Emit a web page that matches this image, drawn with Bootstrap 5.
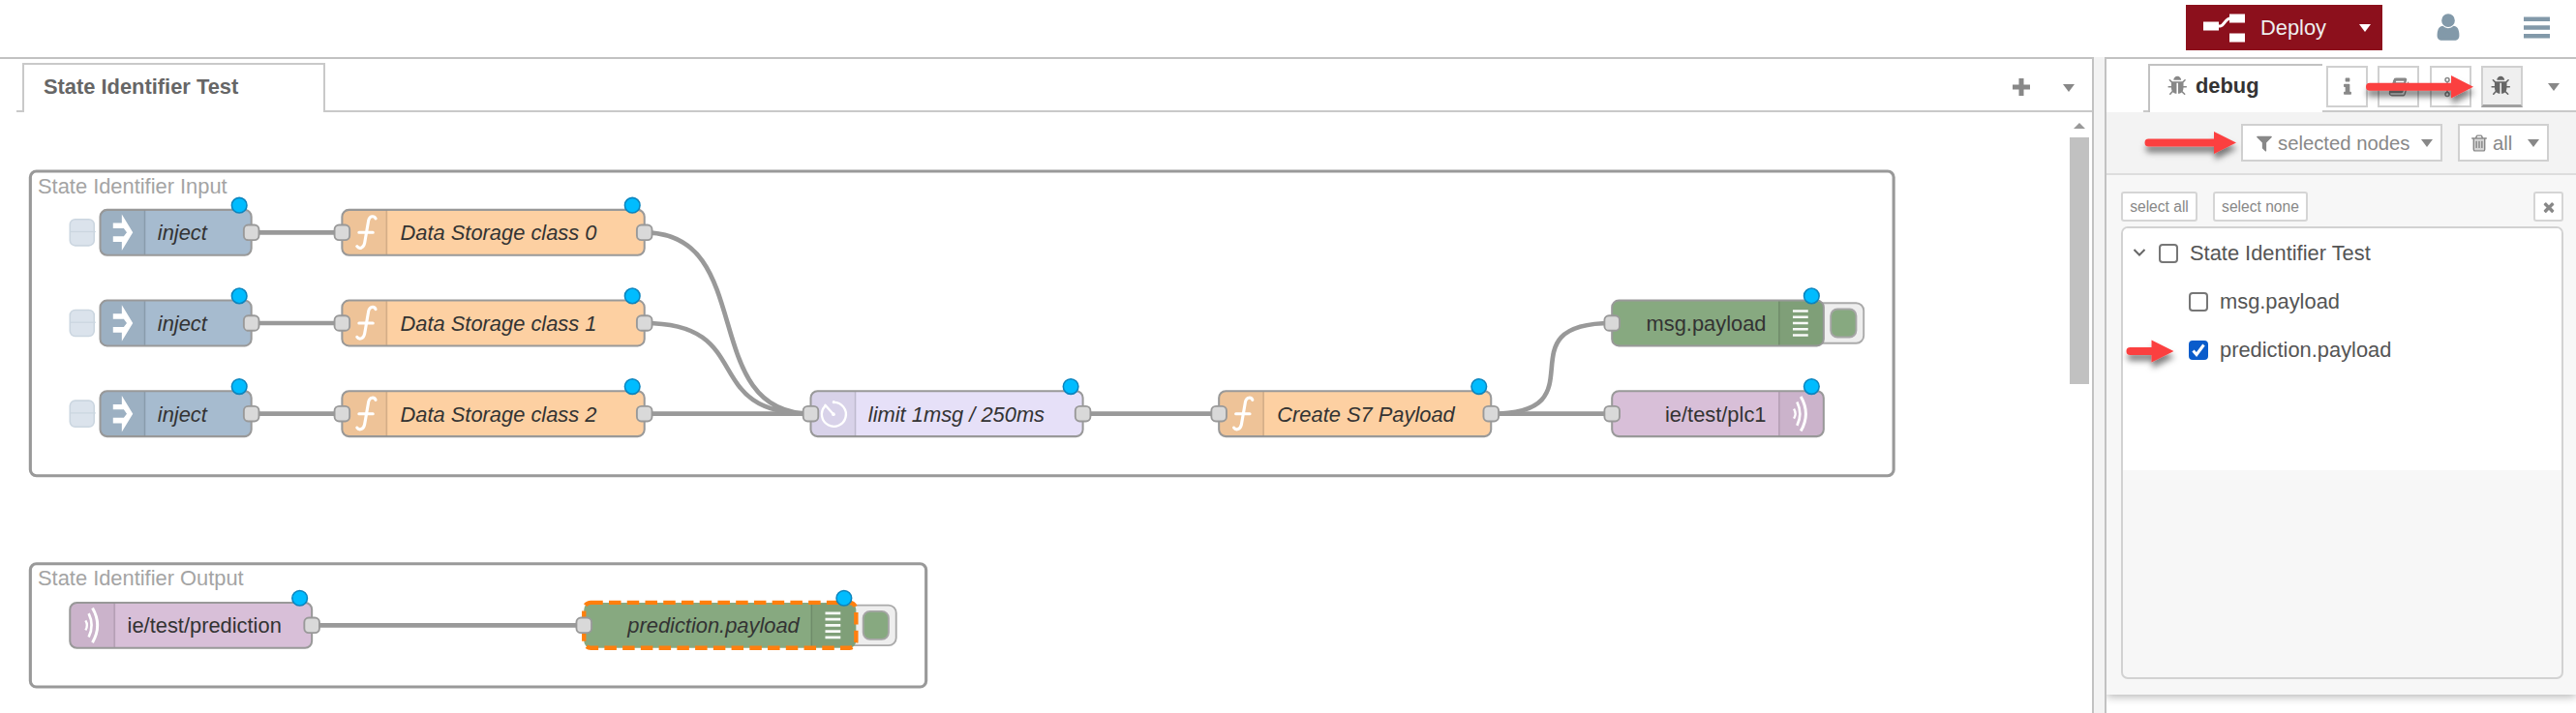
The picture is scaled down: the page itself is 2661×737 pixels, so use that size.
<!DOCTYPE html>
<html lang="en">
<head>
<meta charset="utf-8">
<title>Node-RED</title>
<link href="https://cdn.jsdelivr.net/npm/bootstrap@5.3.0/dist/css/bootstrap.min.css" rel="stylesheet">
<style>
  :root { --line: #c2c2c2; --grey: #888; }
  body { font: 21.87px/30px "Liberation Sans", Arial, sans-serif; color: #555; height: 737px; overflow: hidden; background: #fff; }
  svg { display: block; flex: none; }
  .fa-ico { fill: currentColor; width: 22px; height: 22px; }
  .caret { width: 0; height: 0; border: 6.5px solid transparent; border-top: 8px solid var(--grey); border-bottom: 0; }

  .topbar { height: 59px; padding: 5px 27px 0 0; }
  .deploy { width: 203px; height: 47px; background: #8c101c; color: #eee; padding: 0 12px 0 18px; border: 0; border-radius: 0; font-size: 21.87px; }
  .deploy .caret { border-top-color: #fff; }
  .user { color: #8299a9; width: 32px; height: 32px; margin: 7px 62px 0 52px; }

  .workspace { width: 2163px; border-top: 2px solid var(--line); border-right: 2px solid var(--line); }
  .gutter { width: 11px; background: #f3f3f3; }
  .sidebar { border-top: 2px solid var(--line); border-left: 2px solid var(--line); position: relative; }

  .tabbar { height: 55px; }
  .rule { border-bottom: 2px solid #c9c9c9; }
  .flow-tab { width: 313px; margin-top: 4px; border: 2px solid #c9c9c9; border-bottom: 0; font-weight: 700; color: #666; padding: 8px 0 0 20px; }
  .scroller { width: 23px; padding-top: 11px; }
  .thumb { width: 20px; height: 255px; margin-top: 9px; background: #c1c1c1; }

  .side-tab { width: 180px; margin-top: 5px; border: 2px solid #c2c2c2; border-right: 0; border-bottom: 0; padding: 6px 0 0 18px; font-weight: 700; color: #333; }
  .tool { width: 43px; height: 43px; border: 2px solid #d0d0d0; color: var(--grey); background: #fff; margin-right: 10.3px; }
  .tool.on { background: #efefef; border-bottom: 3px solid #a0a0a0; color: #666; margin-right: 0; }

  .toolbar { height: 65px; background: #f3f3f3; border-bottom: 2px solid #ddd; padding: 12px 28px 0 0; }
  .toolbtn { height: 39px; border: 2px solid #d0d0d0; background: #fff; color: var(--grey); font-size: 20.3px; padding: 0 8px 0 12px; }
  .panel { height: 537px; background: #f7f7f7; padding: 17px 13px 0 15px; box-shadow: 0 2px 9px rgba(0,0,0,.3); clip-path: inset(0 0 -14px 0); }
  .minibtn { height: 31px; border: 2px solid #d5d5d5; border-radius: 3px; background: #fff; color: var(--grey); font-size: 15.6px; line-height: 28px; padding: 0; }
  .tree { height: 468px; margin-top: 5px; border: 2px solid #d2d2d2; border-radius: 7px; overflow: hidden; }
  .tree-items { height: 250px; background: #fff; }
  .tree-row { height: 50px; padding: 11px 0 0 68px; }
  .tree-row.parent { padding-left: 10px; }
  .box { width: 20px; height: 20px; margin: 5px 12px 0 0; border: 2px solid #767676; border-radius: 4px; flex: none; }
  .box.checked { background: #0a5ccb; border-color: #0a5ccb; }
  .callouts { position: absolute; left: 0; top: 0; pointer-events: none; }

  rect.body { stroke: #999; stroke-width: 1.3; }
  .wire { fill: none; stroke: #999; stroke-width: 3; }
  .port { fill: #d9d9d9; stroke: #999; stroke-width: 1.2; }
  .dot { fill: #00bcff; stroke: #0d84bd; stroke-width: 1; }
  .grp { fill: none; stroke: #999; stroke-width: 2; }
  .ntext { font-size: 14px; fill: #333; }
  .glabel { font-size: 14px; fill: #a4a4a4; }
  .it { font-style: italic; }
</style>
</head>
<body class="d-flex flex-column">
<svg width="0" height="0" class="position-absolute">
  <defs>
    <symbol id="bug" viewBox="0 0 1792 1792"><path d="M1632 960q0 26-19 45t-45 19h-224q0 171-67 290l208 209q19 19 19 45t-19 45q-18 19-45 19t-45-19l-198-197q-5 5-15 13t-42 28.500-65 36.500-82 29-97 13v-896h-128v896q-51 0-101.500-13.500t-87-33-66-39-43.500-32.500l-15-14-183 207q-20 21-48 21-24 0-43-16-19-18-20.500-44.500t15.500-46.500l202-227q-58-114-58-274h-224q-26 0-45-19t-19-45 19-45 45-19h224v-294l-173-173q-19-19-19-45t19-45 45-19 45 19l173 173h844l173-173q19-19 45-19t45 19 19 45-19 45l-173 173v294h224q26 0 45 19t19 45zm-480-576h-640q0-133 93.500-226.500t226.500-93.500 226.500 93.500 93.500 226.500z"/></symbol>
    <symbol id="info" viewBox="0 0 1792 1792"><path d="M1216 1344v128q0 26-19 45t-45 19h-512q-26 0-45-19t-19-45v-128q0-26 19-45t45-19h64v-384h-64q-26 0-45-19t-19-45v-128q0-26 19-45t45-19h384q26 0 45 19t19 45v576h64q26 0 45 19t19 45zm-128-1152v192q0 26-19 45t-45 19h-256q-26 0-45-19t-19-45v-192q0-26 19-45t45-19h256q26 0 45 19t19 45z"/></symbol>
    <symbol id="book" viewBox="0 0 1792 1792"><path d="M1703 478q40 57 18 129l-275 906q-19 64-76.500 107.500t-122.500 43.500h-923q-77 0-148.500-53.500t-99.500-131.500q-24-67-2-127 0-4 3-27t4-37q1-8-3-21.500t-3-19.500q2-11 8-21t16.500-23.500 16.500-23.500q23-38 45-91.500t30-91.500q3-10 .5-30t-.5-28q3-11 17-28t17-23q21-36 42-92t25-90q1-9-2.500-32t.5-28q4-13 22-30.500t22-22.500q19-26 42.500-84.500t27.500-96.500q1-8-3-25.500t-2-26.500q2-8 9-18t18-23 17-21q8-12 16.500-30.500t15-35 16-36 19.500-32 26.500-23.500 36-11.500 47.500 5.500l-1 3q38-9 51-9h761q74 0 114 56t18 130l-274 906q-36 119-71.500 153.500t-128.500 34.500h-869q-27 0-38 15-11 16-1 43 24 70 144 70h923q29 0 56-15.500t35-41.500l300-987q7-22 5-57 38 15 59 43zm-1064 2q-4 13 2 22.500t20 9.500h608q13 0 25.500-9.500t16.500-22.500l21-64q4-13-2-22.500t-20-9.500h-608q-13 0-25.500 9.500t-16.500 22.500zm-83 256q-4 13 2 22.500t20 9.500h608q13 0 25.500-9.500t16.500-22.500l21-64q4-13-2-22.500t-20-9.500h-608q-13 0-25.500 9.500t-16.500 22.500z"/></symbol>
    <symbol id="filter" viewBox="0 0 1792 1792"><path d="M1595 295q17 41-14 70l-493 493v742q0 42-39 59-13 5-25 5-27 0-45-19l-256-256q-19-19-19-45v-486l-493-493q-31-29-14-70 17-39 59-39h1280q42 0 59 39z"/></symbol>
    <symbol id="trash" viewBox="0 0 1792 1792"><path fill-opacity=".35" d="M448 512h896v1024h-896z"/><path d="M704 736v576q0 14-9 23t-23 9h-64q-14 0-23-9t-9-23v-576q0-14 9-23t23-9h64q14 0 23 9t9 23zm256 0v576q0 14-9 23t-23 9h-64q-14 0-23-9t-9-23v-576q0-14 9-23t23-9h64q14 0 23 9t9 23zm256 0v576q0 14-9 23t-23 9h-64q-14 0-23-9t-9-23v-576q0-14 9-23t23-9h64q14 0 23 9t9 23zm128 724v-948h-896v948q0 22 7 40.500t14.500 27 10.500 8.500h832q3 0 10.500-8.500t14.500-27 7-40.500zm-672-1076h448l-48-117q-7-9-17-11h-317q-10 2-17 11zm928 32v64q0 14-9 23t-23 9h-96v948q0 83-47 143.500t-113 60.500h-832q-66 0-113-58.500t-47-141.500v-952h-96q-14 0-23-9t-9-23v-64q0-14 9-23t23-9h309l70-167q15-37 54-63t79-26h320q40 0 79 26t54 63l70 167h309q14 0 23 9t9 23z"/></symbol>
    <symbol id="person" viewBox="0 0 1792 1792"><path d="M1536 1399q0 109-62.500 187t-150.500 78h-854q-88 0-150.500-78t-62.500-187q0-85 8.500-160.500t31.500-152 58.500-131 94-89 134.500-34.500q131 128 313 128t313-128q76 0 134.500 34.500t94 89 58.500 131 31.500 152 8.500 160.500zm-256-887q0 159-112.500 271.500t-271.500 112.500-271.500-112.500-112.500-271.500 112.500-271.500 271.500-112.500 271.500 112.500 112.500 271.500z"/></symbol>
    <symbol id="times" viewBox="0 0 1792 1792"><path d="M1490 1322q0 40-28 68l-136 136q-28 28-68 28t-68-28l-294-294-294 294q-28 28-68 28t-68-28l-136-136q-28-28-28-68t28-68l294-294-294-294q-28-28-28-68t28-68l136-136q28-28 68-28t68 28l294 294 294-294q28-28 68-28t68 28l136 136q28 28 28 68t-28 68l-294 294 294 294q28 28 28 68z"/></symbol>

    <g id="i-inject"><path fill="#fff" d="M8.500-6.200H14.300V-12L21.600 0 14.300 12V6.200H8.500V2.600H15.600L17.600 0 15.600-2.800H8.500Z"/></g>
    <g id="i-fn" fill="none" stroke="#fff" stroke-width="2" stroke-linecap="round"><path d="M22.200-9.200C21.300-11.300 18.200-11.200 17.500-8L14.900 7C14.200 10.600 11.200 11.100 9.900 9.200M11.200 0H20.400"/></g>
    <g id="i-timer" fill="none" stroke="#fff" stroke-width="1.500" stroke-linecap="round"><path d="M15.300-7.600A8 8 0 1 1 9.400-5M9.600-5.800L15 .4"/><circle cx="15.200" cy="-7.700" r="1" fill="#fff" stroke="none"/><circle cx="15" cy=".3" r="1.200" fill="#fff" stroke="none"/></g>
    <g id="i-mqtt" fill="none" stroke="#fff"><path stroke-width="1.500" d="M10.300-3.200Q12.300 0 10.300 3.200"/><path stroke-width="1.700" d="M12.400-7.800Q16.200 0 12.400 7.800"/><path stroke-width="1.900" d="M14.900-11.400Q21.500 0 14.900 11.400"/></g>
    <path id="i-debug" stroke="#fff" stroke-width="1.700" stroke-opacity=".95" d="M9.600-8H19.700M9.600-4H19.700M9.600 0H19.700M9.600 4H19.700M9.600 8H19.700"/>
    <rect id="port" class="port" x="-5" y="-5" width="10" height="10" rx="3"/>
    <circle id="dot" class="dot" cy="-18" r="5"/>
    <g id="dbg-btn"><rect x="-6" y="-13.300" width="32.500" height="26.600" rx="5" fill="#eee" stroke="#aaa" stroke-width="1.200"/><rect x="4.700" y="-9.300" width="16.800" height="18.600" rx="4.500" fill="#87a980" stroke="#a5a5a5" stroke-width="1.200"/></g>
    <g id="inject-node">
      <rect x="-20" y="-8.700" width="16" height="17.400" rx="3.500" fill="#dbe3ec" stroke="#cbd6e0" stroke-width="1"/>
      <path d="M-20-.5H-3" stroke="#cbd6e0" stroke-width=".8"/>
      <rect class="body" y="-15" width="100" height="30" rx="4.500" fill="#a6bbcf"/>
      <path d="M4.500-14.400H29.500V14.400H4.500Q.6 14.400.6 10.500V-10.500Q.6-14.400 4.500-14.400Z" fill-opacity=".06"/><path d="M29.500-14.400V14.400" stroke="#000" stroke-opacity=".14"/>
      <use href="#i-inject"/>
      <use href="#port" x="100"/><use href="#dot" x="92"/>
    </g>
    <path id="shade" d="M4.500-14.400H29.500V14.400H4.500Q.6 14.400.6 10.500V-10.500Q.6-14.400 4.500-14.400Z" fill-opacity=".06" stroke="none"/>
    <path id="edge" d="M29.500-14.400V14.400" stroke="#000" stroke-opacity=".14"/>
  </defs>
</svg>

<header class="topbar d-flex justify-content-end align-items-start">
  <button class="deploy d-flex align-items-center">
    <svg width="43" height="30" fill="#fff"><path d="M0 8.500H16V17.500H0ZM27 .5H43V9.500H27ZM27 20.500H43V29.500H27Z"/><path d="M15 13H17.500C22 12.500 22.500 5 28 5" fill="none" stroke="#fff" stroke-width="3"/></svg>
    <span class="ms-3">Deploy</span><span class="caret ms-auto me-0"></span>
  </button>
  <svg class="fa-ico user"><use href="#person"/></svg>
  <svg width="27" height="23" class="mt-2" viewBox="0 -3.500 27 23" overflow="visible" fill="#8299a9"><path d="M0 1H27V5.500H0ZM0 9.700H27V14.200H0ZM0 18.500H27V23H0Z"/></svg>
</header>

<main class="d-flex flex-grow-1">
  <section class="workspace d-flex flex-column">
    <div class="tabbar d-flex">
      <div style="width:17px"></div><div class="rule" style="width:6px"></div>
      <div class="flow-tab">State Identifier Test</div>
      <div class="rule flex-grow-1 d-flex justify-content-end align-items-center pt-1">
        <svg width="18" height="18" class="me-1"><path d="M9 0V18M0 9H18" stroke="#888" stroke-width="5"/></svg>
        <span class="caret" style="margin:2px 18px 0 30px"></span>
      </div>
    </div>
    <div class="d-flex flex-grow-1">
      <svg class="flow" width="2138" height="621" viewBox="0 116 2138 621">
        <g transform="translate(103.500 240.300) scale(1.5617)">
          <rect class="grp" x="-46.200" y="-40.500" width="1232.500" height="201.500" rx="4"/>
          <rect class="grp" x="-46.200" y="219.300" width="592.500" height="81.500" rx="4"/>
          <text class="glabel" x="-41.300" y="-26">State Identifier Input</text>
          <text class="glabel" x="-41.300" y="233.500">State Identifier Output</text>

          <path class="wire" d="M100 0H160M100 60H160M100 120H160M360 120H470M650 120H740M920 120H1000M140 260H320"/>
          <path class="wire" d="M360 0C435 0 395 120 470 120M360 60C435 60 395 120 470 120M920 120C995 120 925 60 1000 60"/>

          <use href="#inject-node"/><use href="#inject-node" y="60"/><use href="#inject-node" y="120"/>
          <text class="ntext it" x="38" y="5">inject</text>
          <text class="ntext it" x="38" y="65">inject</text>
          <text class="ntext it" x="38" y="125">inject</text>

          <g transform="translate(160 0)"><rect class="body" y="-15" width="200" height="30" rx="4.500" fill="#fdd0a2"/><use href="#shade"/><use href="#edge"/><use href="#i-fn"/><text class="ntext it" x="38.500" y="5">Data Storage class 0</text><use href="#port"/><use href="#port" x="200"/><use href="#dot" x="192"/></g>
          <g transform="translate(160 60)"><rect class="body" y="-15" width="200" height="30" rx="4.500" fill="#fdd0a2"/><use href="#shade"/><use href="#edge"/><use href="#i-fn"/><text class="ntext it" x="38.500" y="5">Data Storage class 1</text><use href="#port"/><use href="#port" x="200"/><use href="#dot" x="192"/></g>
          <g transform="translate(160 120)"><rect class="body" y="-15" width="200" height="30" rx="4.500" fill="#fdd0a2"/><use href="#shade"/><use href="#edge"/><use href="#i-fn"/><text class="ntext it" x="38.500" y="5">Data Storage class 2</text><use href="#port"/><use href="#port" x="200"/><use href="#dot" x="192"/></g>
          <g transform="translate(470 120)"><rect class="body" y="-15" width="180" height="30" rx="4.500" fill="#e6e0f8"/><use href="#shade"/><use href="#edge"/><use href="#i-timer"/><text class="ntext it" x="38" y="5">limit 1msg / 250ms</text><use href="#port"/><use href="#port" x="180"/><use href="#dot" x="172"/></g>
          <g transform="translate(740 120)"><rect class="body" y="-15" width="180" height="30" rx="4.500" fill="#fdd0a2"/><use href="#shade"/><use href="#edge"/><use href="#i-fn"/><text class="ntext it" x="38.500" y="5">Create S7 Payload</text><use href="#port"/><use href="#port" x="180"/><use href="#dot" x="172"/></g>

          <g transform="translate(1000 60)"><use href="#dbg-btn" x="140"/><rect class="body" y="-15" width="140" height="30" rx="4.500" fill="#87a980"/><use href="#shade" transform="translate(140 0) scale(-1 1)"/><use href="#edge" x="81"/><use href="#i-debug" x="110"/><text class="ntext" x="102" y="5" text-anchor="end">msg.payload</text><use href="#port"/><use href="#dot" x="132"/></g>
          <g transform="translate(1000 120)"><rect class="body" y="-15" width="140" height="30" rx="4.500" fill="#d8bfd8"/><use href="#shade" transform="translate(140 0) scale(-1 1)"/><use href="#edge" x="81"/><use href="#i-mqtt" x="110"/><text class="ntext" x="102" y="5" text-anchor="end">ie/test/plc1</text><use href="#port"/><use href="#dot" x="132"/></g>

          <g transform="translate(-20 260)"><rect class="body" y="-15" width="160" height="30" rx="4.500" fill="#d8bfd8"/><use href="#shade"/><use href="#edge"/><use href="#i-mqtt"/><text class="ntext" x="38" y="5">ie/test/prediction</text><use href="#port" x="160"/><use href="#dot" x="152"/></g>
          <g transform="translate(320 260)"><use href="#dbg-btn" x="180"/><rect y="-15" width="180" height="30" rx="4.500" fill="#87a980"/><use href="#shade" transform="translate(180 0) scale(-1 1)"/><use href="#edge" x="121"/><rect y="-15" width="180" height="30" rx="4.500" fill="none" stroke="#ff7f0e" stroke-width="2.800" stroke-dasharray="8 4"/><use href="#i-debug" x="150"/><text class="ntext it" x="142.500" y="5" text-anchor="end">prediction.payload</text><use href="#port"/><use href="#dot" x="172"/></g>
        </g>
      </svg>
      <div class="scroller d-flex flex-column align-items-start">
        <svg width="20" height="6"><path d="M4 6 10 0 16 6Z" fill="#999"/></svg>
        <div class="thumb"></div>
      </div>
    </div>
  </section>

  <div class="gutter"></div>

  <aside class="sidebar flex-grow-1">
    <div class="tabbar d-flex">
      <div style="width:38px"></div><div class="rule" style="width:5px"></div>
      <div class="side-tab d-flex"><svg class="fa-ico mt-1"><use href="#bug" fill="#888"/></svg><span style="margin:0 0 0 7px">debug</span></div>
      <div class="rule flex-grow-1 d-flex align-items-center ps-1 pt-1">
        <div class="tool d-flex align-items-center justify-content-center"><svg class="fa-ico"><use href="#info"/></svg></div>
        <div class="tool d-flex align-items-center justify-content-center"><svg class="fa-ico"><use href="#book"/></svg></div>
        <div class="tool d-flex align-items-center justify-content-center"><svg width="22" height="22" fill="none" stroke="#888" stroke-width="1.500"><circle cx="8" cy="3.500" r="2"/><circle cx="8" cy="18.500" r="2"/><path d="M8 5.500V16.500"/></svg></div>
        <div class="tool on d-flex align-items-center justify-content-center"><svg class="fa-ico"><use href="#bug"/></svg></div>
        <span class="caret" style="margin-left:26px"></span>
      </div>
    </div>
    <div class="toolbar d-flex justify-content-end">
      <div class="toolbtn d-flex align-items-center" style="width:208px"><svg class="fa-ico" style="width:20px;height:20px"><use href="#filter"/></svg><span class="ms-1">selected nodes</span><span class="caret ms-auto"></span></div>
      <div class="toolbtn d-flex align-items-center" style="width:94px;margin-left:16px;padding-left:10px"><svg class="fa-ico" style="width:20px;height:20px"><use href="#trash"/></svg><span class="ms-1">all</span><span class="caret ms-auto"></span></div>
    </div>
    <div class="panel">
      <div class="d-flex">
        <div class="minibtn text-center" style="width:79px">select all</div>
        <div class="minibtn text-center" style="width:98px;margin-left:16px">select none</div>
        <div class="minibtn d-flex align-items-center justify-content-center ms-auto" style="width:31px"><svg class="fa-ico" style="width:16px;height:16px"><use href="#times"/></svg></div>
      </div>
      <div class="tree">
        <div class="tree-items">
          <div class="tree-row parent d-flex"><svg width="27" height="30"><path d="M1.500 11 7 16.500 12.500 11" fill="none" stroke="#666" stroke-width="2"/></svg><span class="box"></span>State Identifier Test</div>
          <div class="tree-row d-flex"><span class="box"></span>msg.payload</div>
          <div class="tree-row d-flex"><span class="box checked"><svg width="16" height="16"><path d="M2.500 8.500 6 12.500 13.500 2.500" fill="none" stroke="#fff" stroke-width="3"/></svg></span>prediction.payload</div>
        </div>
      </div>
    </div>
  </aside>
</main>

<svg class="callouts" width="2661" height="737" viewBox="0 0 2661 737">
  <defs><filter id="drop" x="-20%" y="-50%" width="140%" height="250%"><feDropShadow dx="1" dy="6" stdDeviation="3" flood-color="#000" flood-opacity=".5"/></filter></defs>
  <g fill="#fb4141" filter="url(#drop)">
    <path d="M2448 85.700H2532V78L2555 89.700 2532 101.400V93.700H2448A4 4 0 0 1 2448 85.700Z"/>
    <path d="M2219.500 143.500H2287V136L2310 147.500 2287 159V151.500H2219.500A4 4 0 0 1 2219.500 143.500Z"/>
    <path d="M2200.500 359H2222.500V351.500L2245.500 363 2222.500 374.500V367H2200.500A4 4 0 0 1 2200.500 359Z"/>
  </g>
</svg>
<script src="https://cdn.jsdelivr.net/npm/bootstrap@5.3.0/dist/js/bootstrap.bundle.min.js"></script>
</body>
</html>
